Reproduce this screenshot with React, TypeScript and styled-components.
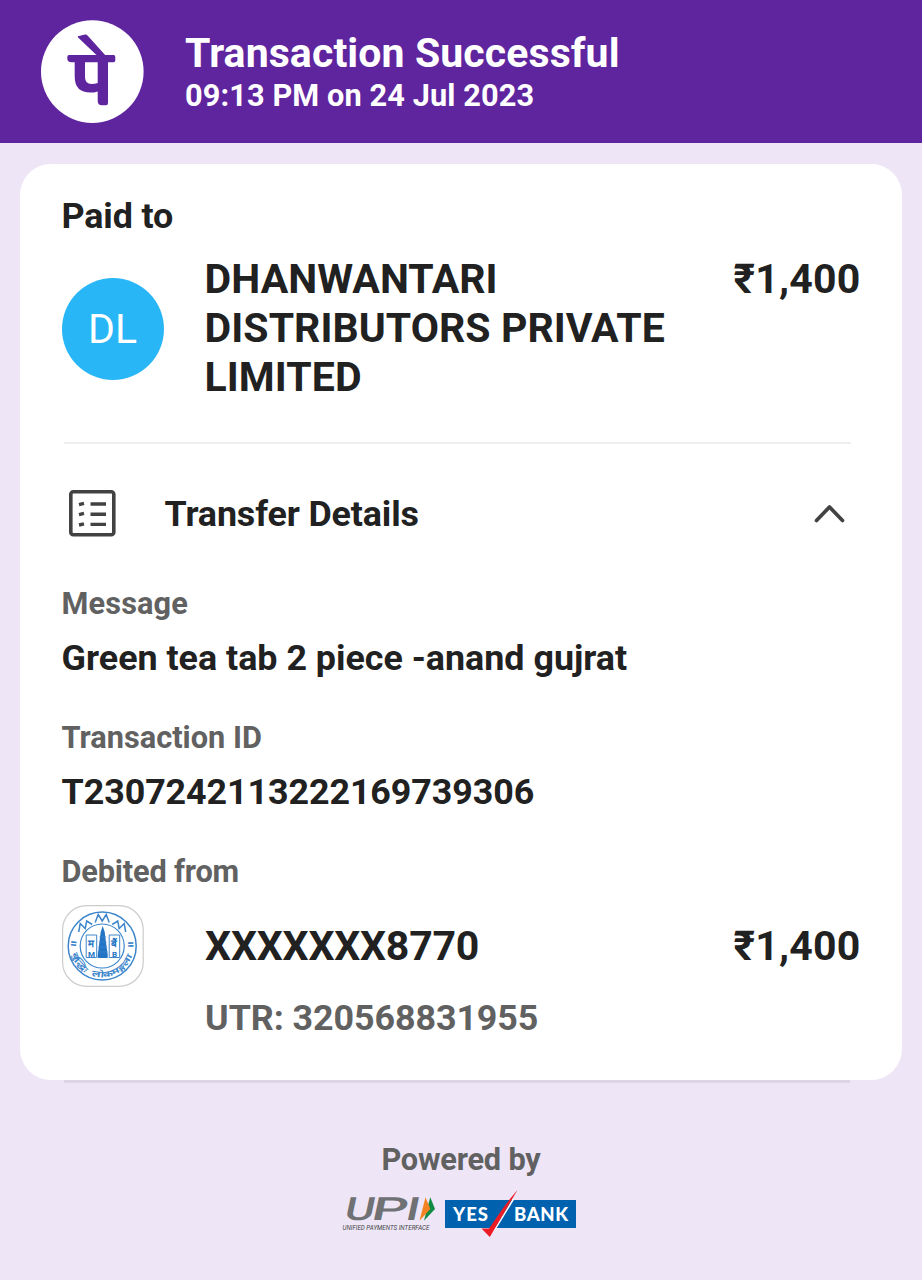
import React from "react";
import styled, { createGlobalStyle } from "styled-components";

type TextProps = {
    $size?: number;
    $line?: number;
    $color?: string;
    $spacing?: number;
}

const GlobalStyle = createGlobalStyle`
    * {
        box-sizing: border-box;
    }
    body {
        margin: 0;
        background-color: #eee6f7;
        font-family: Roboto, "Noto Sans", sans-serif;
    }
`

const Page = styled.div`
    width: 922px;
    height: 1280px;
    overflow: hidden;
    display: flex;
    flex-direction: column;
    background-color: #eee6f7;
`

const Header = styled.header`
    height: 143px;
    flex-shrink: 0;
    display: flex;
    gap: 41px;
    padding: 20px 41px 0;
    background-color: #5f259f;
`

const HeaderText = styled.div`
    padding-top: 9px;
`

const Text = styled.div<TextProps>`
    font-size: ${(props) => props.$size || 35.84}px;
    line-height: ${(props) => props.$line || 42}px;
    color: ${(props) => props.$color || "#212121"};
    letter-spacing: ${(props) => props.$spacing || 0}px;
    font-weight: 700;
    white-space: nowrap;
`

const Card = styled.main`
    height: 916px;
    flex-shrink: 0;
    margin: 21px 20.5px 0 20.4px;
    padding: 31px 41px 0 41.2px;
    border-radius: 31px;
    background-color: #ffffff;
`

const Payee = styled.div`
    display: flex;
    margin-top: 18px;
    height: 187px;
`

const Avatar = styled.div`
    width: 102px;
    height: 102px;
    margin: 23px 41px 0 0;
    border-radius: 50%;
    display: flex;
    align-items: center;
    justify-content: center;
    background-color: #29b6f6;
    color: #ffffff;
    font-size: 41px;
    line-height: 46px;
`

const PayeeName = styled(Text)`
    flex: 1;
    white-space: normal;
`

const Divider = styled.div`
    height: 2px;
    margin: 0 10px 0 2px;
    background-color: #eeeeee;
`

const DetailsRow = styled.div`
    display: flex;
    align-items: center;
    height: 139.5px;
    padding: 0 16px 0 7px;
`

const DetailsTitle = styled(Text)`
    flex: 1;
    margin-left: 49px;
`

const Field = styled.div`
    height: 134px;
`

const Label = styled(Text)`
    padding-top: 1px;
    margin-bottom: 14px;
`

const Account = styled.div`
    display: flex;
`

const AccountInfo = styled.div`
    flex: 1;
    margin: 17px 0 0 61.5px;
`

const Amount = styled(Text)`
    margin-top: ${(props: { $top?: number }) => props.$top || 0}px;
`

const Shadow = styled.div`
    height: 2.5px;
    flex-shrink: 0;
    margin: 0 72px 0 64px;
    background-color: #dcd5e4;
`

const Footer = styled.footer`
    display: flex;
    flex-direction: column;
    align-items: center;
    padding-top: 57px;
`

const Logos = styled.div`
    display: flex;
    gap: 9px;
    margin: 10px 5px 0 0;
`

const PhonePeLogo = () => {
    return(
        <svg width="103" height="103" viewBox="41 20 103 103">
            <circle cx="92.3" cy="71.6" r="51.3" fill="#fff" />
            <g fill="#5f259f">
                <path d="M78 36.2 L84 34.7 Q86.5 34.2 88 36 L106 56 H97.5 L78.6 38 Q77 36.8 78 36.2Z" />
                <path d="M69 55 H113.5 Q115.3 55 115.3 57 V60.5 Q115.3 62.3 113.5 62.3 H108 V103 Q108 105.2 106 105.2 H102 Q97.7 105.2 97.7 101 V91.4 Q94 92.6 90.5 92.6 Q74.7 92.6 74.7 76.5 V62.3 H71.5 Q67.3 62.3 67.3 58.5 V57 Q67.3 55 69 55Z M85 62.3 V77 Q85 84 91.5 84 Q95 84 97.7 83 V62.3Z" fillRule="evenodd" />
            </g>
        </svg>
    )
}

const ListIcon = () => {
    return(
        <svg width="47" height="48" viewBox="0 0 47 48" fill="none" stroke="#424242">
            <rect x="1.8" y="1.8" width="43" height="43" rx="2.5" strokeWidth="3.6" />
            <path d="M10 14.6 L15 13.4 M10 24.6 L15 23.4 M10 35 L15 33.8 M21.5 14 H37 M21.5 24.2 H37 M21.5 34.4 H37" strokeWidth="3.4" />
        </svg>
    )
}

const Chevron = () => {
    return(
        <svg width="32" height="20" viewBox="0 0 32 20" fill="none" stroke="#424242" strokeWidth="3.7" strokeLinecap="round" strokeLinejoin="round">
            <path d="M3.5 16.5 L16.5 3 L29.5 16.5" />
        </svg>
    )
}

const BankSeal = () => {
    return(
        <svg width="82" height="82" viewBox="61.8 905 82 82" fill="none" stroke="#3d86cc">
            <rect x="62.4" y="905.7" width="80.6" height="80.6" rx="24" stroke="#cccccc" strokeWidth="1.2" />
            <circle cx="102" cy="946" r="34" strokeWidth="1.5" />
            <circle cx="102" cy="946" r="22" strokeWidth="1.2" />
            <path d="M78.5 932 L80 923.5 L85 928.5 L86.5 921 L92 924.5 M95 922.5 L98 914.5 L102 921 L106 914.5 L109 922.5 M112 924.5 L117.5 921 L119 928.5 L124 923.5 L125.5 932" strokeWidth="1.5" />
            <path d="M86 935 H96.5 V957.5 H86Z M109 935 H119.5 V957.5 H109Z" strokeWidth="1" />
            <path d="M102.5 926 L104.5 932 L106 944 L107.5 955 V958 H97.5 V955 L99 944 L100.5 932Z" fill="#2374c4" stroke="none" />
            <path d="M99 937 H106 M98.5 942 H106.5 M98 947 H107 M97.5 952 H107.5" strokeWidth=".8" />
            <g fill="#2374c4" stroke="none" fontFamily="Roboto" fontSize="8" fontWeight="700" textAnchor="middle">
                <text x="91.300" y="956.500">M</text>
                <text x="114.300" y="956.500">B</text>
                <text x="91.300" y="946.500" fontSize="10">म</text>
                <text x="114.300" y="946.500" fontSize="10">बैं</text>
            </g>
            <path id="sealArc" d="M71.5 939 A31.3 31.3 0 1 0 132.5 939" stroke="none" />
            <text fill="#3d86cc" stroke="none" fontSize="8.5" fontWeight="700" wordSpacing="3">
                <textPath href="#sealArc" textLength="110" lengthAdjust="spacingAndGlyphs">॥ बुद्धिः लोकमङ्गला ॥</textPath>
            </text>
        </svg>
    )
}

const UpiLogo = () => {
    return(
        <svg width="94" height="48" viewBox="342 1190 94 48">
            <g fill="#707174" fontFamily="Roboto" fontSize="32" fontWeight="500" transform="translate(0 1220.3) skewX(-12)">
                <text x="343" y="0" textLength="30" lengthAdjust="spacingAndGlyphs">U</text>
                <text x="370" y="0" textLength="36" lengthAdjust="spacingAndGlyphs">P</text>
                <text x="404" y="0" textLength="14" lengthAdjust="spacingAndGlyphs">I</text>
            </g>
            <path d="M430.3 1197.3 L435 1209 L424 1220.8 L427 1209Z" fill="#118a44" />
            <path d="M425.5 1197.3 L430.3 1209 L419.5 1220.8Z" fill="#f58220" />
            <text x="342.5" y="1229.5" fill="#444" fontFamily="Roboto" fontSize="7" fontStyle="italic" fontWeight="400" textLength="87" lengthAdjust="spacingAndGlyphs">UNIFIED PAYMENTS INTERFACE</text>
        </svg>
    )
}

const YesBankLogo = () => {
    return(
        <svg width="131" height="48" viewBox="445 1190 131 48">
            <rect x="445" y="1200" width="131" height="28" fill="#0061af" />
            <g fill="#fff" fontFamily="Lato" fontSize="18.5" fontWeight="900">
                <text x="453" y="1220.7" textLength="35">YES</text>
                <text x="514" y="1220.7" textLength="54">BANK</text>
            </g>
            <path d="M513.5 1199 L494.5 1230" stroke="#fff" strokeWidth="1.6" />
            <path d="M517.5 1190 L489.8 1237 L481.5 1228.5 L489 1228.5 C495 1221 501 1209 517.5 1190Z" fill="#ed1c24" />
        </svg>
    )
}

const App: React.FC<{}> = () => {
    return(
        <Page>
            <GlobalStyle />
            <Header>
                <PhonePeLogo />
                <HeaderText>
                    <Text $size={41} $line={49} $color="#fff" $spacing={0.1}>Transaction Successful</Text>
                    <Text $size={30.72} $line={36} $color="#fff" $spacing={0.1}>09:13 PM on 24 Jul 2023</Text>
                </HeaderText>
            </Header>
            <Card>
                <Text $spacing={-0.15}>Paid to</Text>
                <Payee>
                    <Avatar>DL</Avatar>
                    <PayeeName $size={41} $line={49} $spacing={0.06}>DHANWANTARI DISTRIBUTORS PRIVATE LIMITED</PayeeName>
                    <Amount $size={41} $line={49} $spacing={0.2}>₹1,400</Amount>
                </Payee>
                <Divider />
                <DetailsRow>
                    <ListIcon />
                    <DetailsTitle $spacing={-0.13}>Transfer Details</DetailsTitle>
                    <Chevron />
                </DetailsRow>
                <Field>
                    <Label $size={30.72} $line={38} $color="#616161" $spacing={0.1}>Message</Label>
                    <Text>Green tea tab 2 piece -anand gujrat</Text>
                </Field>
                <Field>
                    <Label $size={30.72} $line={38} $color="#616161">Transaction ID</Label>
                    <Text $spacing={-0.08}>T2307242113222169739306</Text>
                </Field>
                <Label $size={30.72} $line={38} $color="#616161" $spacing={-0.18}>Debited from</Label>
                <Account>
                    <BankSeal />
                    <AccountInfo>
                        <Text $size={41} $line={49} $spacing={-0.2}>XXXXXXX8770</Text>
                        <Text $line={94} $color="#616161" $spacing={-0.07}>UTR: 320568831955</Text>
                    </AccountInfo>
                    <Amount $size={41} $line={49} $top={17} $spacing={0.2}>₹1,400</Amount>
                </Account>
            </Card>
            <Shadow />
            <Footer>
                <Text $size={30.72} $line={40} $color="#616161" $spacing={-0.2}>Powered by</Text>
                <Logos>
                    <UpiLogo />
                    <YesBankLogo />
                </Logos>
            </Footer>
        </Page>
    )
}

export default App;
